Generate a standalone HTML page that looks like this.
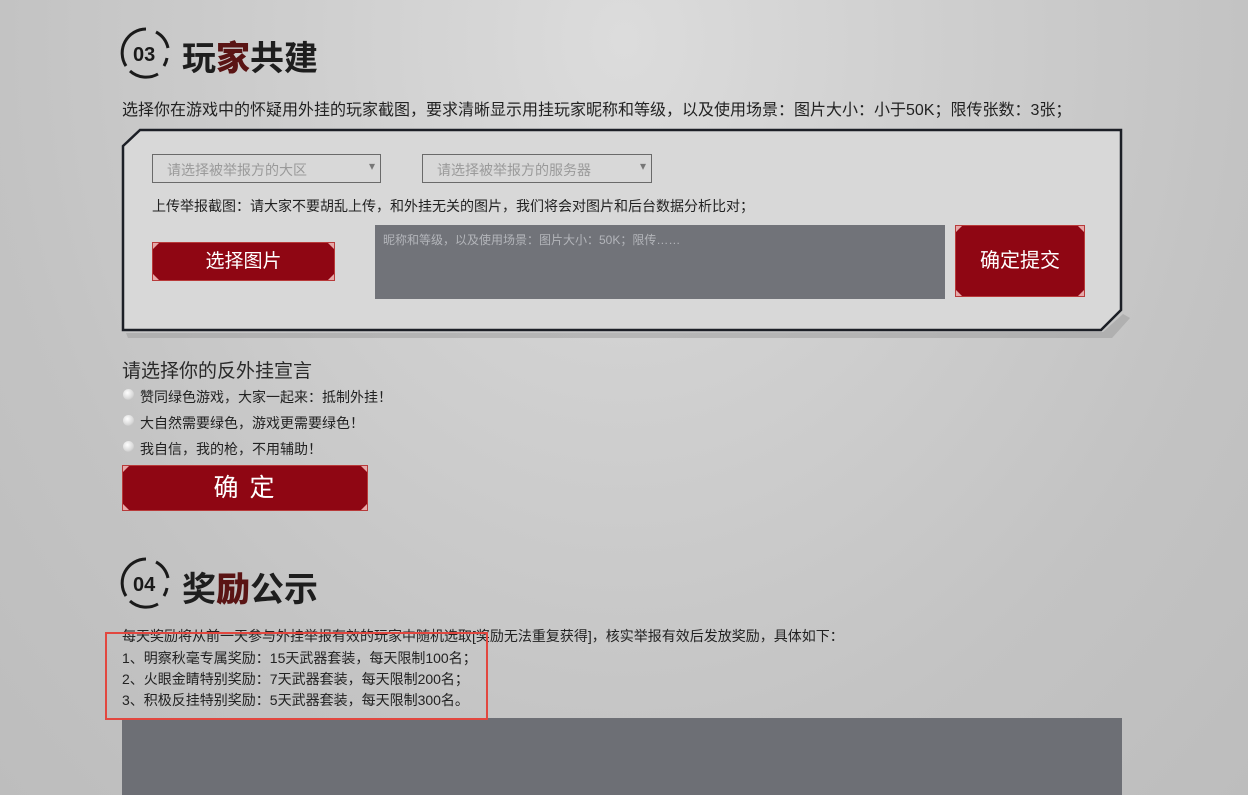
<!DOCTYPE html>
<html><head><meta charset="utf-8"><style>
*{margin:0;padding:0;box-sizing:border-box}
body{width:1248px;height:795px;overflow:hidden;position:relative;font-family:"Liberation Sans","Noto Sans CJK SC",sans-serif;color:#222;
background:radial-gradient(ellipse at 50% 5%,#dcdcdc 0%,#cfcfcf 35%,#c3c3c3 70%,#bdbdbd 100%);}
.a{position:absolute}
.title{font-size:34px;font-weight:bold;color:#1e1e1e;letter-spacing:0px}
.title b{color:#5a1414}
.t14{font-size:15px;color:#222;white-space:nowrap}
.sel{border:1px solid #6a6a6a;height:29px;color:#9a9a9a;font-size:14px;padding:5px 14px;}
.sel:after{content:"▾";position:absolute;right:5px;top:4px;font-size:12px;color:#777}
.btn{background:#8f0613;border:1px solid #b83a3a;color:#fff;text-align:center}
.btn i{position:absolute;width:0;height:0;border:3px solid transparent}
.tl{left:0;top:0;border-left-color:#e6a8a8!important;border-top-color:#e6a8a8!important}
.tr{right:0;top:0;border-right-color:#e6a8a8!important;border-top-color:#e6a8a8!important}
.bl{left:0;bottom:0;border-left-color:#e6a8a8!important;border-bottom-color:#e6a8a8!important}
.br{right:0;bottom:0;border-right-color:#e6a8a8!important;border-bottom-color:#e6a8a8!important}
.radio{width:11px;height:11px;border-radius:50%;background:radial-gradient(circle at 40% 35%,#fff,#d8d8d8 60%,#aaa);}
</style></head><body>

<svg class="a" style="left:120px;top:26px" width="52" height="54" viewBox="0 0 52 54">
<path d="M26 3 A24 24 0 0 0 6 40" fill="none" stroke="#1a1a1a" stroke-width="3"/>
<path d="M10 45 A24 24 0 0 0 38 48" fill="none" stroke="#1a1a1a" stroke-width="3"/>
<path d="M36 6 A24 24 0 0 1 48 22" fill="none" stroke="#1a1a1a" stroke-width="3"/>
<path d="M47 32 A24 24 0 0 1 44 40" fill="none" stroke="#1a1a1a" stroke-width="3"/>
<text x="13" y="35" font-family="Liberation Sans" font-weight="bold" font-size="20" fill="#1a1a1a">03</text></svg>
<div class="a title" style="left:182px;top:31px">玩<b>家</b>共建</div>
<div class="a t14" style="left:122px;top:96px;font-size:16px">选择你在游戏中的怀疑用外挂的玩家截图，要求清晰显示用挂玩家昵称和等级，以及使用场景：图片大小：小于50K；限传张数：3张；</div>

<svg class="a" style="left:118px;top:124px" width="1015" height="215">
<polygon points="1005,190 1012,194 994,214 10,214 8,209 985,208" fill="#9a9a9a" opacity=".5"/>
<polygon points="22,6 1003,6 1003,186 983,206 5,206 5,22" fill="#d8d8d8" stroke="#1c1f26" stroke-width="2.5"/>
</svg>
<div class="a sel" style="left:152px;top:154px;width:229px">请选择被举报方的大区</div>
<div class="a sel" style="left:422px;top:154px;width:230px">请选择被举报方的服务器</div>
<div class="a t14" style="left:152px;top:196px;font-size:14px">上传举报截图：请大家不要胡乱上传，和外挂无关的图片，我们将会对图片和后台数据分析比对；</div>
<div class="a btn" style="left:152px;top:242px;width:183px;height:39px;font-size:19px;line-height:38px"><i class="tl"></i><i class="tr"></i><i class="bl"></i><i class="br"></i>选择图片</div>
<div class="a" style="left:375px;top:225px;width:570px;height:74px;background:#717379;color:#b3b5ba;font-size:12px;padding:6px 8px">昵称和等级，以及使用场景：图片大小：50K；限传……</div>
<div class="a btn" style="left:955px;top:225px;width:130px;height:72px;font-size:20px;line-height:70px"><i class="tl"></i><i class="tr"></i><i class="bl"></i><i class="br"></i>确定提交</div>

<div class="a" style="left:122px;top:356px;font-size:19px;color:#2a2a2a">请选择你的反外挂宣言</div>
<div class="a radio" style="left:123px;top:389px"></div><div class="a t14" style="left:140px;top:387px;font-size:14px">赞同绿色游戏，大家一起来：抵制外挂！</div>
<div class="a radio" style="left:123px;top:415px"></div><div class="a t14" style="left:140px;top:413px;font-size:14px">大自然需要绿色，游戏更需要绿色！</div>
<div class="a radio" style="left:123px;top:441px"></div><div class="a t14" style="left:140px;top:439px;font-size:14px">我自信，我的枪，不用辅助！</div>
<div class="a btn" style="left:122px;top:465px;width:246px;height:46px;font-size:25px;line-height:44px;letter-spacing:2px"><i class="tl"></i><i class="tr"></i><i class="bl"></i><i class="br"></i>确 定</div>

<svg class="a" style="left:120px;top:556px" width="52" height="54" viewBox="0 0 52 54">
<path d="M26 3 A24 24 0 0 0 6 40" fill="none" stroke="#1a1a1a" stroke-width="3"/>
<path d="M10 45 A24 24 0 0 0 38 48" fill="none" stroke="#1a1a1a" stroke-width="3"/>
<path d="M36 6 A24 24 0 0 1 48 22" fill="none" stroke="#1a1a1a" stroke-width="3"/>
<path d="M47 32 A24 24 0 0 1 44 40" fill="none" stroke="#1a1a1a" stroke-width="3"/>
<text x="13" y="35" font-family="Liberation Sans" font-weight="bold" font-size="20" fill="#1a1a1a">04</text></svg>
<div class="a title" style="left:182px;top:562px">奖<b>励</b>公示</div>
<div class="a t14" style="left:122px;top:626px;font-size:14px">每天奖励将从前一天参与外挂举报有效的玩家中随机选取[奖励无法重复获得]，核实举报有效后发放奖励，具体如下：</div>
<div class="a t14" style="left:122px;top:648px;font-size:14px">1、明察秋毫专属奖励：15天武器套装，每天限制100名；</div>
<div class="a t14" style="left:122px;top:669px;font-size:14px">2、火眼金睛特别奖励：7天武器套装，每天限制200名；</div>
<div class="a t14" style="left:122px;top:690px;font-size:14px">3、积极反挂特别奖励：5天武器套装，每天限制300名。</div>
<div class="a" style="left:122px;top:718px;width:1000px;height:77px;background:#6d6f75"></div>
<div class="a" style="left:105px;top:632px;width:383px;height:88px;border:2.5px solid #e2473f"></div>
</body></html>
